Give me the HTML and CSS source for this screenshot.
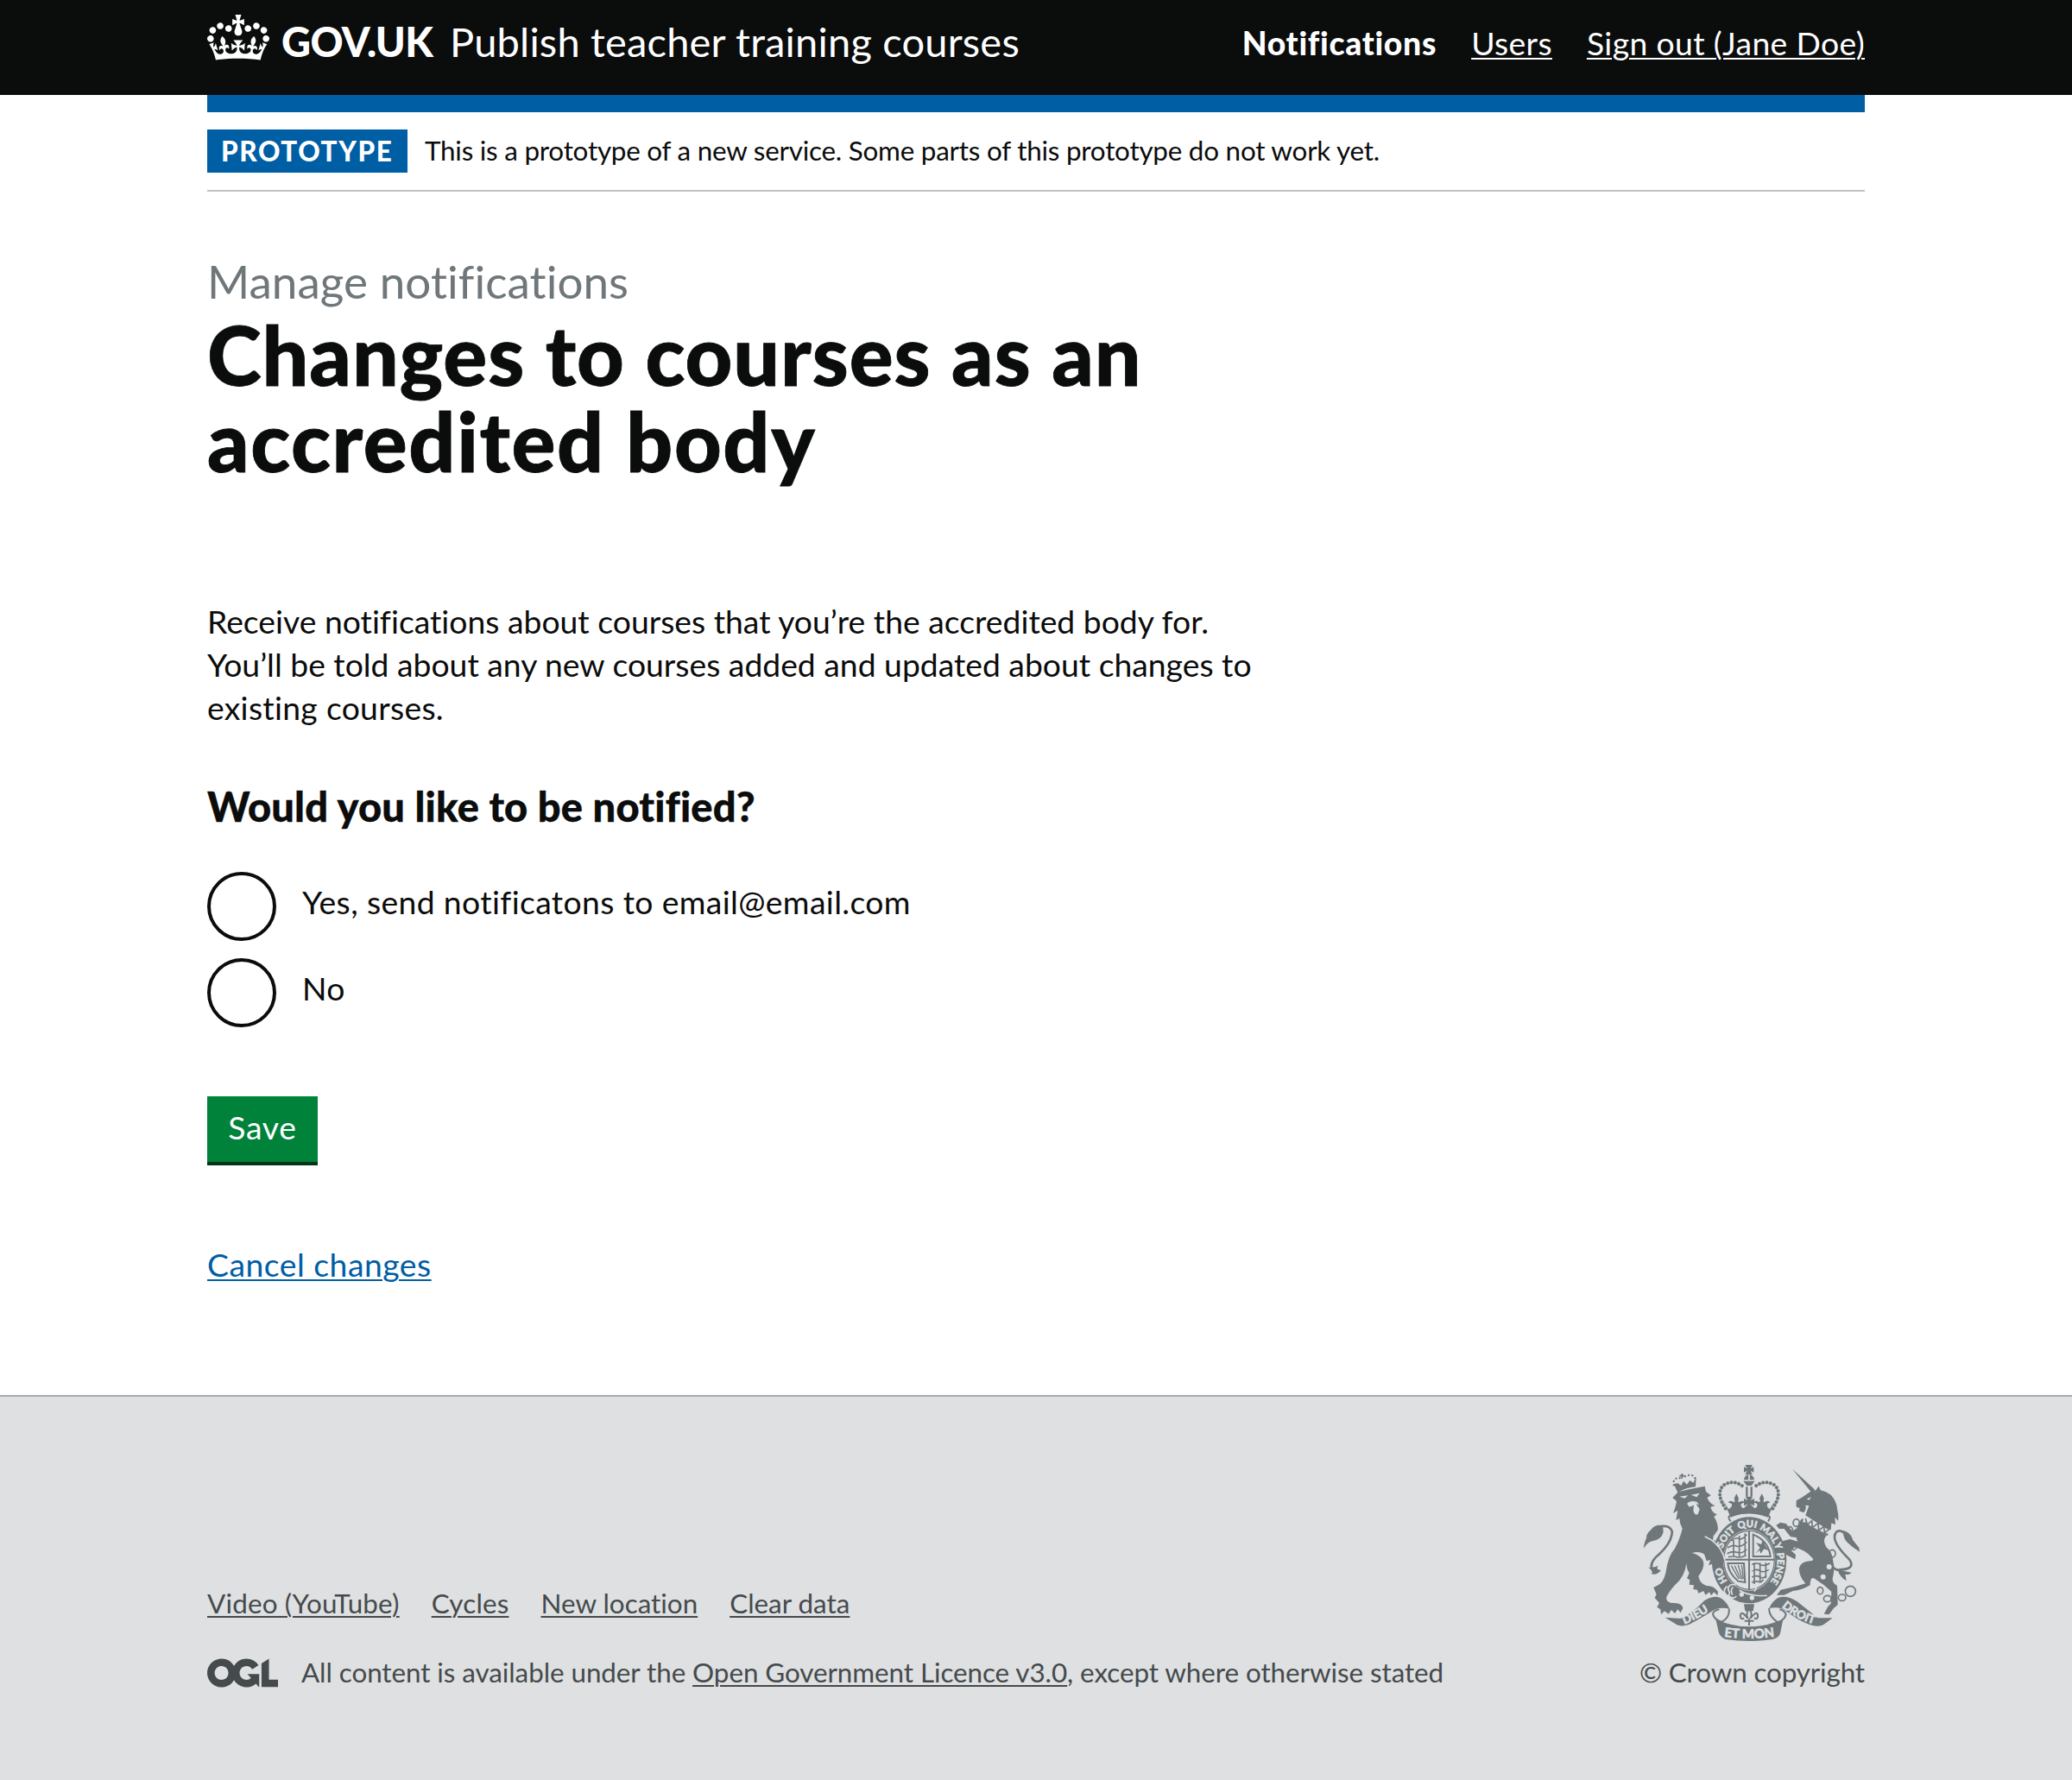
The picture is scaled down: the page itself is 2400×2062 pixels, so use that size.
FILE: index.html
```html
<!DOCTYPE html>
<html lang="en">
<head>
<meta charset="utf-8">
<title>Changes to courses as an accredited body</title>
<link rel="stylesheet" href="styles.css">
</head>
<body>
<header class="header">
  <div class="container header-row">
    <div class="brand">
      <svg class="crown" viewBox="0 0 132 97" aria-hidden="true"><path fill="currentColor" d="M25 30.2c3.5 1.5 7.7-.2 9.1-3.7 1.5-3.6-.2-7.8-3.9-9.2-3.6-1.4-7.6.3-9.1 3.9-1.4 3.5.3 7.5 3.9 9zM9 39.5c3.6 1.5 7.8-.2 9.2-3.7 1.5-3.6-.2-7.8-3.9-9.1-3.6-1.5-7.6.2-9.1 3.8-1.4 3.5.3 7.5 3.8 9zM4.4 57.2c3.5 1.5 7.7-.2 9.1-3.8 1.5-3.6-.2-7.7-3.9-9.1-3.5-1.5-7.6.3-9.1 3.8-1.4 3.5.3 7.6 3.9 9.1zm38.3-21.4c3.5 1.5 7.7-.2 9.1-3.8 1.5-3.6-.2-7.7-3.9-9.1-3.6-1.5-7.6.3-9.1 3.8-1.3 3.6.4 7.7 3.9 9.1zm64.4-5.6c-3.6 1.5-7.8-.2-9.1-3.7-1.5-3.6.2-7.8 3.8-9.2 3.6-1.4 7.7.3 9.2 3.9 1.3 3.5-.4 7.5-3.9 9zm15.9 9.3c-3.6 1.5-7.7-.2-9.1-3.7-1.5-3.6.2-7.8 3.7-9.1 3.6-1.5 7.7.2 9.2 3.8 1.5 3.5-.3 7.5-3.8 9zm4.7 17.7c-3.6 1.5-7.8-.2-9.2-3.8-1.5-3.6.2-7.7 3.9-9.1 3.6-1.5 7.7.3 9.2 3.8 1.3 3.5-.4 7.6-3.9 9.1zM89.3 35.8c-3.6 1.5-7.8-.2-9.2-3.8-1.4-3.6.2-7.7 3.9-9.1 3.6-1.5 7.7.3 9.2 3.8 1.4 3.6-.3 7.7-3.9 9.1zM69.7 17.7l8.9 4.7V9.3l-8.9 2.8c-.2-.3-.5-.6-.9-.9L72.4 0H59.6l3.5 11.2c-.3.3-.6.5-.9.9l-8.8-2.8v13.1l8.8-4.7c.3.3.6.7.9.9l-5 15.4v.1c-.2.8-.4 1.6-.4 2.4 0 4.1 3.1 7.5 7 8.1h.2c.3 0 .7.1 1 .1.4 0 .7 0 1-.1h.2c4-.6 7.1-4.1 7.1-8.1 0-.8-.1-1.7-.4-2.4V34l-5.1-15.4c.4-.2.7-.6 1-.9zM66 92.8c16.9 0 32.8 1.1 47.1 3.2 4-16.9 8.9-26.7 14-33.5l-9.6-3.4c1 4.9 1.1 7.2 0 10.2-1.5-1.4-3-4.3-4.2-8.7L108.6 76c2.8-2 5-3.2 7.5-3.3-4.4 9.4-10 11.9-13.6 11.2-4.3-.8-6.3-4.6-5.6-7.9 1-4.7 5.7-5.9 8-.5 4.3-8.7-3-11.4-7.6-8.8 7.1-7.2 7.9-13.5 2.1-21.1-8 6.1-8.1 12.3-4.5 20.8-4.7-5.4-12.1-2.5-9.5 6.2 3.4-5.2 7.9-2 7.2 3.1-.6 4.3-6.4 7.8-13.5 7.2-10.3-.9-10.9-8-11.2-13.8 2.5-.5 7.1 1.8 11 7.3L80.2 60c-4.1 4.4-8 5.3-12.3 5.4 1.4-4.4 8-11.6 8-11.6H55.5s6.4 7.2 7.9 11.6c-4.2-.1-8-1-12.3-5.4l1.4 16.4c3.9-5.5 8.5-7.7 10.9-7.3-.3 5.8-.9 12.8-11.1 13.8-7.2.6-12.9-2.9-13.5-7.2-.7-5 3.8-8.3 7.1-3.1 2.7-8.7-4.6-11.6-9.4-6.2 3.7-8.5 3.6-14.7-4.6-20.8-5.8 7.6-5 13.9 2.2 21.1-4.7-2.6-11.9.1-7.7 8.8 2.3-5.5 7.1-4.2 8.1.5.7 3.3-1.3 7.1-5.7 7.9-3.5.7-9-1.8-13.5-11.2 2.5.1 4.7 1.3 7.5 3.3l-4.7-15.4c-1.2 4.4-2.7 7.2-4.3 8.7-1.1-3-.9-5.3 0-10.2l-9.5 3.4c5 6.9 9.9 16.7 14 33.5 14.8-2.1 30.8-3.2 47.7-3.2z"/></svg>
      <span class="logotype">GOV.UK</span>
      <span class="service">Publish teacher training courses</span>
    </div>
    <nav class="nav">
      <a class="nav-current">Notifications</a>
      <a class="link">Users</a>
      <a class="link">Sign out (Jane Doe)</a>
    </nav>
  </div>
</header>
<div class="container">
  <div class="bar"></div>
  <div class="phase">
    <strong class="tag">PROTOTYPE</strong>
    <span class="phase-text">This is a prototype of a new service. Some parts of this prototype do not work yet.</span>
  </div>
  <main class="main">
    <span class="caption">Manage notifications</span>
    <h1 class="title">Changes to courses as an<br><span class="title-end">accredited body</span></h1>
    <p class="lead">Receive notifications about courses that you’re the accredited body for.<br>You’ll be told about any new courses added and updated about changes to<br><span class="lead-end">existing courses.</span></p>
    <h2 class="question">Would you like to be notified?</h2>
    <div class="radios">
      <label class="radio"><span class="dot"></span><span class="radio-label">Yes, send notificatons to email@email.com</span></label>
      <label class="radio"><span class="dot"></span><span class="radio-label">No</span></label>
    </div>
    <button class="button">Save</button>
    <p class="cancel"><a class="link link-blue">Cancel changes</a></p>
  </main>
</div>
<footer class="footer">
  <div class="container footer-row">
    <div>
      <div class="footer-links">
        <a class="link">Video (YouTube)</a><a class="link">Cycles</a><a class="link">New location</a><a class="link">Clear data</a>
      </div>
      <div class="licence">
        <svg class="ogl" viewBox="0 0 483.2 195.7" aria-hidden="true"><path fill="currentColor" d="M421.5 142.8V.1l-50.7 32.3v161.1h112.4v-50.7zm-122.3-9.6A47.12 47.12 0 0 1 221 97.8c0-26 21.1-47.1 47.1-47.1 16.7 0 31.4 8.7 39.7 21.8l42.7-27.2A97.63 97.63 0 0 0 268.1 0c-36.5 0-68.3 20.1-85.1 49.7A98 98 0 0 0 97.8 0C43.9 0 0 43.9 0 97.8s43.9 97.8 97.8 97.8c36.5 0 68.3-20.1 85.1-49.7a97.76 97.76 0 0 0 149.6 25.4l19.4 22.2h3v-87.8h-80l24.3 27.5zM97.8 145c-26 0-47.1-21.1-47.1-47.1s21.1-47.1 47.1-47.1 47.1 21.1 47.1 47.1S123.8 145 97.8 145"/></svg>
        <span class="licence-text">All content is available under the <a class="link">Open Government Licence v3.0</a>, except where otherwise stated</span>
      </div>
    </div>
    <div class="copyright">
      <svg class="crest" viewBox="60 48 780 624" aria-hidden="true">
        <defs>
          <path id="garter" d="M363 458A98 114 0 1 1 494 478"/>
          <path id="dieu" d="M213 608Q262 590 318 548"/>
          <path id="droit" d="M551 547Q600 590 672 610"/>
          <path id="etmon" d="M345 650Q438 664 532 650"/>
        </defs>
        <g class="ink">
          <!-- lion -->
          <path d="M172 168L192 148Q235 136 284 128L288 147L305 160L292 168Q300 188 320 196L304 200Q308 218 326 226L316 234Q334 262 328 290L314 300Q312 316 330 332Q346 350 342 372L350 384L342 396L346 408L328 404L318 412L308 398L298 402L304 384L290 386L282 364Q262 352 240 360Q282 372 280 402Q276 424 262 440Q266 466 290 474Q308 474 320 484L330 494L328 508L316 496L306 508L300 496L286 506L280 492L262 500L258 488L244 486L246 472L230 470L232 454L222 448L230 430Q222 420 220 396Q216 440 180 472Q158 496 150 516Q152 536 180 534Q206 536 208 552L200 568L190 556L180 570L168 558L158 572L144 562L132 574L130 556L118 548L126 534L110 516L116 504L106 480L122 472Q140 464 148 430Q156 370 180 344Q196 316 206 276L198 256L196 240L184 246L190 212L174 222Q184 196 186 180Z"/>
          <path d="M106 426Q84 398 126 364Q172 320 170 284Q162 262 128 268" class="line w8"/>
          <path d="M138 264Q110 260 98 278Q78 296 82 306Q72 328 72 344Q84 322 104 318Q136 312 140 286Z"/>
          <path d="M88 410Q110 412 122 404Q112 418 132 420Q116 440 98 432L104 424Z"/>
          <path d="M176 120L190 150Q220 132 252 130L254 96L244 116L232 108L222 122L210 110L202 126L190 118Z"/>
          <path d="M176 124Q172 96 200 100Q204 84 212 96Q244 78 252 106" class="line w7 dots"/>
          <path d="M196 92h18M205 84v18" class="line w5"/>
          <!-- unicorn -->
          <path d="M588 68L662 136L668 144L680 128L686 142Q706 146 722 158Q742 180 744 206Q750 230 748 248L736 236L738 262L724 256L722 280Q690 276 632 234L646 196L634 194Q638 206 628 220L612 214L614 204L602 200L602 178Q622 168 632 160L652 146Z"/>
          <path d="M622 240Q664 282 716 300L706 300Q692 316 706 340Q728 356 730 390Q736 410 730 440Q722 462 744 474L746 540L732 552L716 574L698 572L712 546L722 536L724 494Q700 470 670 452Q650 436 650 472Q620 490 590 492L560 506L534 506L548 488L600 476L634 466Q610 440 612 412Q618 390 650 388Q670 386 652 372Q632 350 596 340L584 352L600 366L598 382L566 366L552 332L556 318L580 312L606 320L602 306L582 304L560 276L542 276L532 264L546 254L566 258L588 284L604 274Q612 250 622 240Z"/>
          <path d="M720 400Q740 424 754 418Q810 416 786 382Q716 314 742 286Q760 276 780 304" class="line w8"/>
          <path d="M766 282Q792 290 798 314L820 342L822 356Q796 340 780 324Q762 306 766 282Z"/>
          <path d="M744 416Q770 424 794 428Q786 438 772 434L776 456Q756 448 744 416Z"/>
          <g class="line w5"><ellipse cx="602" cy="255" rx="11" ry="13"/><ellipse cx="580" cy="280" rx="9" ry="11"/><ellipse cx="592" cy="336" rx="11" ry="13"/><ellipse cx="727" cy="362" rx="11" ry="13"/><ellipse cx="685" cy="491" rx="10" ry="12"/><ellipse cx="710" cy="519" rx="13" ry="11"/><ellipse cx="761" cy="515" rx="13" ry="11"/><circle cx="790" cy="493" r="18"/></g>
          <!-- imperial crown -->
          <path d="M424 54h26l-7 12 11-5v19l-11-5 7 13h-26l7-13-11 5V61l11 5zM420 106A18 18 0 0 1 456 106zM418 110h40l-12 16h-16z"/>
          <path d="M438 88v18" class="cut"/>
          <path d="M430 130v34M446 130v34" class="line w7"/>
          <path d="M356 206Q320 150 350 124Q384 104 416 128M520 206Q556 150 526 124Q492 104 460 128" class="line w12 dots"/>
          <path d="M348 178L374 236Q438 210 504 236L528 178L510 208Q496 200 502 188Q508 184 512 186Q504 174 490 184Q486 180 490 170L482 154L474 170Q478 180 474 184Q460 174 452 186Q458 184 466 190Q468 204 456 204L442 190L456 196V170L444 178L450 164H426L432 178L420 170V196L434 190L420 204Q408 204 410 190Q418 184 424 186Q416 174 402 184Q398 180 402 170L394 154L386 170Q390 180 386 184Q372 174 364 186Q370 184 378 190Q380 200 366 208Z"/>
          <path d="M374 250Q358 232 380 228Q438 212 498 228Q518 232 504 250" class="line w6"/>
          <!-- garter and shield -->
          <ellipse cx="438" cy="385" rx="130" ry="150"/>
          <ellipse cx="438" cy="385" rx="91" ry="106" class="paper"/>
          <path d="M438 283V490M351 383H526" class="line w6"/>
          <ellipse cx="438" cy="385" rx="88" ry="102" class="line w4"/>
          <path d="M376 318q14-14 26-8t28-14M364 342q16-12 30-6t36-14M362 362q18-10 34-4t34-10M366 374q20-4 30 0t32-6M404 300v72M384 316v56M424 292v78" class="line w5"/>
          <path d="M448 400q16-8 28 0t34-4M448 422q16-8 28 0t30-4M448 444q16-8 28 0t22-6M448 462q12-6 22-2t18-8M456 394v74M476 394v70M496 394v54" class="line w5"/>
          <path d="M452 296V372H512Q506 318 452 296Z" class="line w6"/>
          <path d="M460 362l16-20-14-18 18 6 6-16 8 20 12 18-16-6-12 16-4-12z"/>
          <path d="M364 396H420L424 462L400 458Q366 430 364 396Z" class="line w6"/>
          <path d="M376 404l26 46M388 404l20 46M400 402l14 50M412 402l6 48" class="line w4"/>
        </g>
        <g class="paper">
          <path d="M196 164L226 160L214 170ZM236 158L266 152L256 166ZM222 188Q232 176 256 182L264 192L254 190L266 208L260 226Q248 230 244 212L246 194L230 200Z"/>
          <path d="M638 172l16-6-8 10zM632 228L720 284L712 300L624 252Z"/>
          <circle cx="412" cy="504" r="8"/><circle cx="448" cy="516" r="8"/><circle cx="716" cy="408" r="9"/><circle cx="695" cy="443" r="9"/>
        </g>
        <path d="M630 254Q670 284 712 296" class="line w5"/>
        <path d="M634 240l6 22 16-14 2 24 20-16 2 26 18-14 2 22 16-12" class="line w5"/>
        <path d="M312 322Q320 286 346 270M404 490Q440 512 500 508M456 494l8-14M362 476Q340 492 366 512" class="cut"/>
        <path d="M392 470Q362 466 366 490Q374 498 366 508Q382 524 394 510" class="cut"/>
        <path d="M382 478Q372 490 380 506" class="cut"/>
        <text class="motto"><textPath href="#garter" startOffset="0">HO</textPath></text>
        <text class="motto"><textPath href="#garter" startOffset="118">SOIT</textPath></text>
        <text class="motto"><textPath href="#garter" startOffset="207">QUI</textPath></text>
        <text class="motto"><textPath href="#garter" startOffset="280">MAL</textPath></text>
        <text class="motto"><textPath href="#garter" startOffset="355">Y</textPath></text>
        <text class="motto"><textPath href="#garter" startOffset="387">PENSE</textPath></text>
        <path class="ink" d="M284 304Q328 326 344 362L350 384L342 396L346 408L328 404L318 412L308 398L298 402L304 384L290 386L276 340Z"/>
        <path class="cut" d="M284 302Q332 324 348 366L354 386"/>
        <g class="ink">
          <!-- ribbons -->
          <path d="M146 584L200 588Q244 568 282 526Q320 504 342 518Q362 532 370 554Q330 546 310 562Q260 594 230 608Q196 620 178 604Z"/>
          <path d="M728 586L676 586Q640 556 604 528Q566 504 538 516Q516 530 508 552Q546 544 566 562Q610 596 646 608Q680 620 698 608Z"/>
          <path d="M322 590Q438 642 556 590L546 640Q540 656 520 660Q438 672 356 660Q336 652 332 634Z"/>
          <path d="M368 554Q372 584 342 600Q316 590 312 572Q314 560 334 556M508 552Q504 576 538 602Q562 592 566 574Q562 560 544 556" class="line w6"/>
          <path d="M420 538H456L452 562H424Z"/>
          <path d="M438 554Q424 570 434 588Q406 552 408 584Q412 592 420 586M438 554Q452 570 442 588Q470 552 468 584Q464 592 456 586M422 596H454M438 588V612" class="line w6"/>
        </g>
        <text class="motto motto-side"><textPath href="#dieu">DIEU</textPath></text>
        <text class="motto motto-side"><textPath href="#droit">DROIT</textPath></text>
        <text class="motto motto-base"><textPath href="#etmon" startOffset="6">ET MON</textPath></text>
      </svg>
      <span class="copyright-text">© Crown copyright</span>
    </div>
  </div>
</footer>
</body>
</html>
```
FILE: styles.css
```css
body {
  margin: 0;
  background: #fff;
  color: #0b0c0c;
  font: 37.3px/50px Lato, "Noto Sans", sans-serif;
  font-variant-ligatures: none;
}
.container { width: 1920px; margin: 0 auto; }
.link { text-decoration: underline; text-decoration-thickness: 2px; text-underline-offset: 3px; letter-spacing: 0.36px; }
.link-blue { color: #005ea5; letter-spacing: 0.5px; }

.header { height: 110px; background: #0b0c0c; color: #fff; }
.header-row { display: flex; justify-content: space-between; align-items: flex-start; }
.brand { display: flex; align-items: flex-start; font-size: 47px; }
.crown { width: 72px; height: 53px; margin-top: 17px; }
.logotype { width: 177px; margin: 23px 0 0 14px; font-weight: 900; letter-spacing: -0.6px; }
.service { margin: 23px 0 0 18px; letter-spacing: 0.19px; }
.nav { display: flex; gap: 40px; padding-top: 25px; }
.nav-current { font-weight: 900; letter-spacing: 0.7px; }

.bar { height: 20px; background: #005ea5; }
.phase { display: flex; height: 50px; padding: 20px 0; border-bottom: 2px solid #bfc1c3; font-size: 31.4px; letter-spacing: -0.23px; }
.tag { box-sizing: border-box; width: 232px; height: 50px; padding-left: 16px; background: #005ea5; color: #fff; font-weight: 900; letter-spacing: 1.6px; }
.phase-text { margin: -1px 0 0 20px; }

.main { height: 1320px; padding-top: 74px; }
.caption { display: block; color: #6f777b; font-size: 53px; line-height: 60px; letter-spacing: 0.05px; }
.title { margin: 4px 0 0; font-size: 95px; font-weight: 900; line-height: 100px; letter-spacing: 0.95px; -webkit-text-stroke: 0.8px #0b0c0c; }
.title-end { letter-spacing: 1.6px; }
.lead { margin: 135px 0 0; }
.lead-end { letter-spacing: 0.3px; }
.question { margin: 64px 0 0; font-size: 47px; font-weight: 900; line-height: 50px; letter-spacing: 0.2px; -webkit-text-stroke: 0.4px #0b0c0c; }
.radios { display: flex; flex-direction: column; gap: 20px; margin-top: 51px; }
.radio { display: flex; gap: 30px; }
.dot { box-sizing: border-box; width: 80px; height: 80px; border: 4px solid #0b0c0c; border-radius: 50%; }
.radio-label { margin-top: 10px; letter-spacing: 0.37px; }
.button {
  display: block;
  width: 128px;
  height: 76px;
  margin: 80px 0 0;
  padding: 0 0 5px;
  border: 0;
  background: #00823b;
  box-shadow: 0 4px 0 #003618;
  color: #fff;
  font: inherit;
  letter-spacing: 0.8px;
}
.cancel { margin: 94px 0 0; }

.footer { height: 444px; border-top: 2px solid #a1acb2; background: #dee0e2; color: #454a4c; font-size: 31.4px; line-height: 40px; }
.footer-row { display: flex; justify-content: space-between; align-items: flex-end; padding-top: 77px; }
.footer-links { display: flex; gap: 37px; }
.footer-links .link { letter-spacing: 0.18px; }
.footer-links .link:nth-child(n+3) { letter-spacing: 0; }
.licence { display: flex; margin-top: 40px; }
.licence-text, .licence-text .link { letter-spacing: -0.07px; }
.ogl { width: 82px; height: 34px; margin: 4px 27px 0 0; }
.copyright { display: flex; flex-direction: column; align-items: flex-end; }
.copyright-text { letter-spacing: -0.13px; }
.crest { width: 260px; height: 208px; margin-bottom: 14px; }
.ink { fill: #6f777b; }
.paper { fill: #dee0e2; }
.line { fill: none; stroke: #6f777b; }
.cut { fill: none; stroke: #dee0e2; stroke-width: 5; }
.w4 { stroke-width: 4; }
.w5 { stroke-width: 5; }
.w6 { stroke-width: 6; }
.w7 { stroke-width: 7; }
.w8 { stroke-width: 8; }
.w12 { stroke-width: 12; }
.dots { stroke-linecap: round; stroke-dasharray: 0.1 13; }
.motto { fill: #dee0e2; stroke: #dee0e2; stroke-width: 1.4; font-size: 34px; font-weight: 900; }
.motto-side { font-size: 41px; }
.motto-base { font-size: 45px; }
```
